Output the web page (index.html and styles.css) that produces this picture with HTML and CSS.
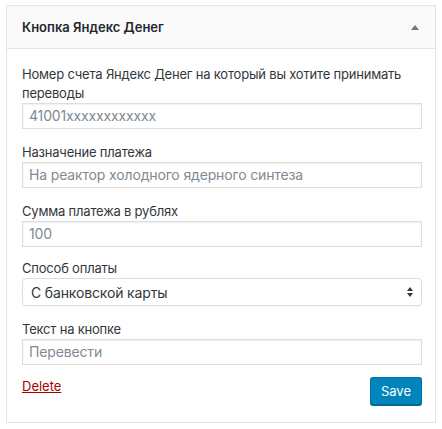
FILE: index.html
```html
<!DOCTYPE html>
<html lang="ru">
<head>
<meta charset="utf-8">
<title>Кнопка Яндекс Денег</title>
<link rel="stylesheet" href="styles.css">
</head>
<body>
<div class="widget">
  <div class="widget-top">
    <h3 class="widget-title">Кнопка Яндекс Денег</h3>
    <svg class="toggle" width="8" height="5" viewBox="0 0 8 5"><path d="M4 0 L8 5 L0 5 Z" fill="#72777c"/></svg>
  </div>
  <div class="widget-inside">
    <div class="field">
      <label class="field-label">Номер счета Яндекс Денег на который вы хотите принимать переводы</label>
      <div class="text-input">41001xxxxxxxxxxxx</div>
    </div>
    <div class="field">
      <label class="field-label">Назначение платежа</label>
      <div class="text-input">На реактор холодного ядерного синтеза</div>
    </div>
    <div class="field">
      <label class="field-label">Сумма платежа в рублях</label>
      <div class="text-input">100</div>
    </div>
    <div class="field field-select">
      <label class="field-label">Способ оплаты</label>
      <div class="select-input">
        <span>С банковской карты</span>
        <svg class="select-arrows" width="6" height="10" viewBox="0 0 6 10"><path d="M3 0 L6 4 L0 4 Z M3 10 L6 6 L0 6 Z" fill="#32373c"/></svg>
      </div>
    </div>
    <div class="field field-last">
      <label class="field-label">Текст на кнопке</label>
      <div class="text-input">Перевести</div>
    </div>
    <div class="actions">
      <a class="delete-link" href="#">Delete</a>
      <button class="save-button" type="button">Save</button>
    </div>
  </div>
</div>
</body>
</html>
```
FILE: styles.css
```css
html, body {
  margin: 0;
  padding: 0;
  background: #ffffff;
}
body {
  padding: 5px 6px 0 6px;
  font-family: Inter, "Noto Sans", "Liberation Sans", sans-serif;
  font-size: 13px;
  color: #32373c;
}
.widget {
  width: 430px;
  box-sizing: border-box;
  border: 1px solid #e5e5e5;
  background: #fff;
}
.widget-top {
  height: 42px;
  background: #fafafa;
  border-bottom: 1px solid #e5e5e5;
  display: flex;
  align-items: center;
  justify-content: space-between;
  padding: 0 15px 0 15px;
}
.widget-title {
  margin: 0;
  font-size: 13px;
  font-weight: 600;
  color: #23282d;
}
.toggle {
  display: block;
  margin-right: 1px;
}
.widget-inside {
  padding: 16px 13px 16px 15px;
}
.field {
  margin-bottom: 14px;
}
.field-select {
  margin-top: -2px;
}
.field-last {
  margin-bottom: 12px;
}
.field-label {
  display: block;
  line-height: 19px;
  color: #32373c;
  font-size: 13px;
  letter-spacing: -0.2px;
}
.text-input {
  height: 24px;
  box-sizing: content-box;
  border: 1px solid #dddddd;
  box-shadow: inset 0 1px 2px rgba(0,0,0,0.07);
  padding: 0 6px;
  font-size: 14px;
  line-height: 24px;
  color: #7e8993;
  letter-spacing: -0.15px;
}
.select-input {
  height: 26px;
  border: 1px solid #dddddd;
  border-radius: 4px;
  box-shadow: 0 1px 1px rgba(0,0,0,0.04);
  padding: 0 8px 0 8px;
  display: flex;
  align-items: center;
  justify-content: space-between;
  font-size: 14px;
  color: #32373c;
  letter-spacing: -0.15px;
}
.select-arrows {
  display: block;
}
.actions {
  display: flex;
  justify-content: space-between;
  align-items: flex-start;
}
.delete-link {
  color: #a00;
  font-size: 13px;
  line-height: 18px;
  text-decoration: underline;
}
.save-button {
  height: 28px;
  padding: 0 10px;
  border: 1px solid #0073aa;
  border-bottom-color: #006799;
  border-radius: 3px;
  background: #0085ba;
  box-shadow: 0 1px 0 #006799;
  color: #fff;
  font-family: Inter, "Noto Sans", "Liberation Sans", sans-serif;
  font-size: 13px;
  margin-bottom: 1px;
}
```
